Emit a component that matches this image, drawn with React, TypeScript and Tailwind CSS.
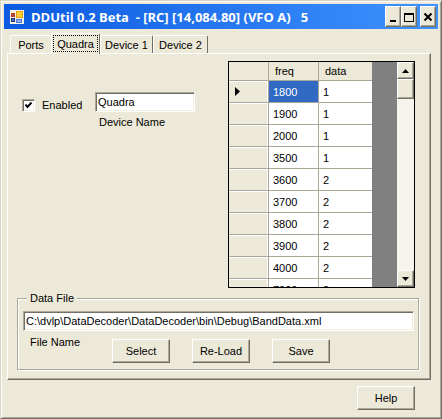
import React, { useState } from "react";

const raised =
  "border border-t-white border-l-white border-r-[#716f64] border-b-[#716f64] shadow-[inset_-1px_-1px_0_#aca899]";
const sunken =
  "border border-t-[#aca899] border-l-[#aca899] border-r-white border-b-white shadow-[inset_1px_1px_0_#716f64,inset_-1px_-1px_0_#f1efe2]";

const rows = [
  { freq: "1800", data: "1" },
  { freq: "1900", data: "1" },
  { freq: "2000", data: "1" },
  { freq: "3500", data: "1" },
  { freq: "3600", data: "2" },
  { freq: "3700", data: "2" },
  { freq: "3800", data: "2" },
  { freq: "3900", data: "2" },
  { freq: "4000", data: "2" },
  { freq: "7000", data: "3" },
];

function PushButton({ children }: { children: React.ReactNode }) {
  return (
    <button type="button" className={`h-6 w-[58px] bg-[#ece9d8] ${raised}`}>
      {children}
    </button>
  );
}

function CaptionButton({ label, children }: { label: string; children: React.ReactNode }) {
  return (
    <button
      type="button"
      aria-label={label}
      className={`flex h-[21px] w-4 items-center justify-center bg-[#ece9d8] ${raised}`}
    >
      {children}
    </button>
  );
}

function TitleBar() {
  return (
    <header className="flex h-[25px] items-center bg-linear-to-r from-[#0a5ae0] to-[#3f92ff] pr-0.5 pl-1.5">
      <svg width="14" height="14" viewBox="0 0 14 14" shapeRendering="crispEdges" aria-hidden="true">
        <rect width="14" height="14" fill="#f4f1e6" />
        <rect x="1" y="3" width="4" height="4" fill="#b8402c" />
        <rect x="6" y="1" width="7" height="7" fill="#e0a010" />
        <rect x="7" y="2" width="5" height="5" fill="#ffcf3a" />
        <rect x="1" y="8" width="4" height="4" fill="#20306c" />
        <rect x="2" y="9" width="2" height="2" fill="#4a70c8" />
        <rect x="6" y="9" width="6" height="4" fill="#5078d8" />
        <rect x="7" y="10" width="4" height="2" fill="#8fb0f4" />
      </svg>
      <h1 className="ml-[7px] flex-1 font-['Open_Sans','Noto_Sans',sans-serif] text-[13px] leading-[20px] font-bold whitespace-pre text-white">
        {"DDUtil 0.2 Beta  - [RC] [14,084.80] (VFO A)   5"}
      </h1>
      <div className="flex">
        <CaptionButton label="Minimize">
          <svg width="12" height="14" viewBox="0 0 12 14" shapeRendering="crispEdges">
            <rect x="3" y="10" width="6" height="2" />
          </svg>
        </CaptionButton>
        <CaptionButton label="Maximize">
          <svg width="12" height="14" viewBox="0 0 12 14" shapeRendering="crispEdges">
            <path d="M1 3h10v9H1zM2 5v6h8V5z" fillRule="evenodd" />
          </svg>
        </CaptionButton>
        <div className="ml-[3px] flex">
          <CaptionButton label="Close">
            <svg width="10" height="10" viewBox="0 0 10 10">
              <path d="M1.5 1.5l7 7M8.5 1.5l-7 7" stroke="#000" strokeWidth="2" />
            </svg>
          </CaptionButton>
        </div>
      </div>
    </header>
  );
}

const tabs = [
  { name: "Ports", width: "w-[41px]" },
  { name: "Quadra", width: "w-[49px]" },
  { name: "Device 1", width: "w-[53px]" },
  { name: "Device 2", width: "w-[55px]" },
];

function TabStrip() {
  const [active, setActive] = useState("Quadra");
  return (
    <div role="tablist" className="flex h-5 items-end px-[3px]">
      {tabs.map((tab) => {
        const selected = tab.name === active;
        return (
          <button
            key={tab.name}
            type="button"
            role="tab"
            aria-selected={selected}
            onClick={() => setActive(tab.name)}
            className={`${tab.width} rounded-t-xs border-t border-l border-t-white border-l-white bg-[#ece9d8] whitespace-nowrap ${
              selected
                ? "relative -mb-px h-[21px] border-r border-r-[#716f64] p-px pb-0.5"
                : tab.name === "Ports"
                  ? "h-[18px]"
                  : "h-[18px] border-r border-r-[#716f64]"
            }`}
          >
            {selected ? (
              <span className="flex h-full items-center justify-center border border-dotted border-black">
                {tab.name}
              </span>
            ) : (
              tab.name
            )}
          </button>
        );
      })}
    </div>
  );
}

function BandGrid() {
  return (
    <div className="flex h-[227px] w-[187px] overflow-hidden border border-black bg-[#808080]">
      <div className="h-full flex-1 overflow-hidden">
        <table className="w-[143px] table-fixed border-separate border-spacing-0 bg-white text-left">
          <colgroup>
            <col className="w-10" />
            <col className="w-[50px]" />
            <col className="w-[53px]" />
          </colgroup>
          <thead>
            <tr className="h-[19px] bg-[#ece9d8]">
              <th className="border-r border-b border-[#aca899] p-0" aria-label="Row" />
              <th className="border-r border-b border-[#aca899] p-0 pl-1.5 font-normal">freq</th>
              <th className="border-b border-[#aca899] p-0 pl-1.5 font-normal">data</th>
            </tr>
          </thead>
          <tbody>
            {rows.map((row, i) => (
              <tr key={row.freq} className="h-[22px]">
                <th className="border-r border-b border-[#aca899] bg-[#ece9d8] p-0 pl-1.5 shadow-[inset_-1px_1px_0_#fff]">
                  {i === 0 && (
                    <svg width="5" height="9" viewBox="0 0 5 9" aria-label="Current row">
                      <path d="M0 0l5 4.5L0 9z" />
                    </svg>
                  )}
                </th>
                <td
                  className={`border-r border-b border-[#aca899] p-0 pl-1 ${i === 0 ? "bg-[#316ac5] text-white" : ""}`}
                >
                  {row.freq}
                </td>
                <td className="border-b border-[#aca899] p-0 pl-1">{row.data}</td>
              </tr>
            ))}
          </tbody>
        </table>
      </div>
      <div className="flex w-[17px] flex-col bg-[#f6f4ec]">
        <button
          type="button"
          aria-label="Scroll up"
          className={`flex h-[17px] items-center justify-center bg-[#ece9d8] ${raised}`}
        >
          <svg width="7" height="4" viewBox="0 0 7 4">
            <path d="M0 4L3.5 0 7 4z" />
          </svg>
        </button>
        <div className={`h-5 bg-[#ece9d8] ${raised}`} />
        <button
          type="button"
          aria-label="Scroll down"
          className={`mt-auto flex h-[17px] items-center justify-center bg-[#ece9d8] ${raised}`}
        >
          <svg width="7" height="4" viewBox="0 0 7 4">
            <path d="M0 0h7L3.5 4z" />
          </svg>
        </button>
      </div>
    </div>
  );
}

function DevicePanel() {
  return (
    <div className="flex justify-between pr-[15px] pl-3.5">
      <div className="flex items-start pt-[31px]">
        <label className="mt-1.5 flex w-[73px] items-center gap-[7px]">
          <span className="grid">
            <input
              type="checkbox"
              defaultChecked
              className={`peer col-start-1 row-start-1 size-[13px] appearance-none bg-white ${sunken}`}
            />
            <svg
              width="13"
              height="13"
              viewBox="0 0 13 13"
              className="pointer-events-none invisible col-start-1 row-start-1 peer-checked:visible"
            >
              <path d="M3.5 5.5l2 2.5 4-4.5" fill="none" stroke="#000" strokeWidth="2" />
            </svg>
          </span>
          Enabled
        </label>
        <div className="flex flex-col">
          <input
            id="device-name"
            defaultValue="Quadra"
            className={`h-5 w-[100px] bg-white px-0.5 ${sunken}`}
          />
          <label htmlFor="device-name" className="mt-[3px] ml-1">
            Device Name
          </label>
        </div>
      </div>
      <BandGrid />
    </div>
  );
}

function DataFile() {
  return (
    <fieldset className="mr-[11px] ml-[9px] mt-[3px] border border-[#aca899] pr-1 pl-[5px] pb-1.5 shadow-[1px_1px_0_#fff,inset_1px_1px_0_#fff]">
      <legend className="ml-1 bg-[#ece9d8] px-[3px]">Data File</legend>
      <input
        id="file-name"
        defaultValue="C:\dvlp\DataDecoder\DataDecoder\bin\Debug\BandData.xml"
        className={`mt-1.5 block h-5 w-full bg-white px-0.5 ${sunken}`}
      />
      <div className="mt-1 flex items-start pl-[7px]">
        <label htmlFor="file-name" className="w-[82px]">
          File Name
        </label>
        <div className="flex gap-[22px] pt-1">
          <PushButton>Select</PushButton>
          <PushButton>Re-Load</PushButton>
          <PushButton>Save</PushButton>
        </div>
      </div>
    </fieldset>
  );
}

export default function App() {
  return (
    <main className="flex min-h-screen flex-col border border-t-[#d8d4c4] border-r-[#716f64] border-b-[#716f64] border-l-[#d8d4c4] bg-[#ece9d8] p-[3px] font-['Liberation_Sans',Arial,sans-serif] text-[11px] leading-[14px] text-black shadow-[inset_1px_1px_0_#fff,inset_-1px_-1px_0_#aca899]">
      <TitleBar />
      <div className="px-[3px] pt-1">
        <TabStrip />
        <section
          role="tabpanel"
          className="mr-1 border border-t-white border-r-[#716f64] border-b-[#716f64] border-l-white pt-[7px] pb-[9px] shadow-[inset_-1px_-1px_0_#aca899]"
        >
          <DevicePanel />
          <DataFile />
        </section>
        <div className="mt-1.5 flex justify-end pr-5">
          <PushButton>Help</PushButton>
        </div>
      </div>
    </main>
  );
}
